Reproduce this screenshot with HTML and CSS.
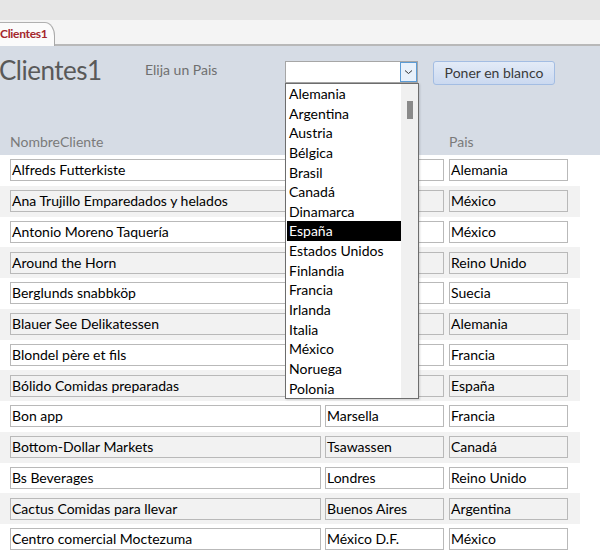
FILE: index.html
```html
<!DOCTYPE html>
<html lang="es">
<head>
<meta charset="utf-8">
<link rel="stylesheet" href="styles.css">
</head>
<body>
<div class="app">
  <div class="topbar"></div>
  <div class="tabstrip"><div class="tab">Clientes1</div></div>
  <div class="header">
    <div class="toprow">
      <div class="title">Clientes1</div>
      <div class="prompt">Elija un Pais</div>
      <div class="combo">
        <div class="combo-text"></div>
        <div class="combo-btn"><svg width="9" height="6" viewBox="0 0 9 6"><path d="M1 1.5 L4.5 4.5 L8 1.5" fill="none" stroke="#333" stroke-width="1"/></svg></div>
      </div>
      <div class="btn">Poner en blanco</div>
    </div>
    <div class="colheads">
      <div class="ch ch-name">NombreCliente</div>
      <div class="ch ch-city"></div>
      <div class="ch ch-country">Pais</div>
    </div>
  </div>
  <div class="rows">
    <div class="row"><div class="tb name">Alfreds Futterkiste</div><div class="tb city"></div><div class="tb country">Alemania</div></div>
    <div class="row alt"><div class="tb name">Ana Trujillo Emparedados y helados</div><div class="tb city"></div><div class="tb country">México</div></div>
    <div class="row"><div class="tb name">Antonio Moreno Taquería</div><div class="tb city"></div><div class="tb country">México</div></div>
    <div class="row alt"><div class="tb name">Around the Horn</div><div class="tb city"></div><div class="tb country">Reino Unido</div></div>
    <div class="row"><div class="tb name">Berglunds snabbköp</div><div class="tb city"></div><div class="tb country">Suecia</div></div>
    <div class="row alt"><div class="tb name">Blauer See Delikatessen</div><div class="tb city"></div><div class="tb country">Alemania</div></div>
    <div class="row"><div class="tb name">Blondel père et fils</div><div class="tb city"></div><div class="tb country">Francia</div></div>
    <div class="row alt"><div class="tb name">Bólido Comidas preparadas</div><div class="tb city"></div><div class="tb country">España</div></div>
    <div class="row"><div class="tb name">Bon app</div><div class="tb city">Marsella</div><div class="tb country">Francia</div></div>
    <div class="row alt"><div class="tb name">Bottom-Dollar Markets</div><div class="tb city">Tsawassen</div><div class="tb country">Canadá</div></div>
    <div class="row"><div class="tb name">Bs Beverages</div><div class="tb city">Londres</div><div class="tb country">Reino Unido</div></div>
    <div class="row alt"><div class="tb name">Cactus Comidas para llevar</div><div class="tb city">Buenos Aires</div><div class="tb country">Argentina</div></div>
    <div class="row"><div class="tb name">Centro comercial Moctezuma</div><div class="tb city">México D.F.</div><div class="tb country">México</div></div>
  </div>
  <div class="list">
    <div class="items">
      <div class="item">Alemania</div>
      <div class="item">Argentina</div>
      <div class="item">Austria</div>
      <div class="item">Bélgica</div>
      <div class="item">Brasil</div>
      <div class="item">Canadá</div>
      <div class="item">Dinamarca</div>
      <div class="item sel">España</div>
      <div class="item">Estados Unidos</div>
      <div class="item">Finlandia</div>
      <div class="item">Francia</div>
      <div class="item">Irlanda</div>
      <div class="item">Italia</div>
      <div class="item">México</div>
      <div class="item">Noruega</div>
      <div class="item">Polonia</div>
    </div>
    <div class="scroll"><div class="thumb"></div></div>
  </div>
</div>
</body>
</html>
```

FILE: styles.css
```css
html, body {
  margin: 0;
  padding: 0;
  background: #ffffff;
}
body {
  font-family: Lato, "Open Sans", sans-serif;
  width: 600px;
  height: 554px;
  overflow: hidden;
}
.app {
  position: relative;
  width: 600px;
  height: 554px;
  overflow: hidden;
}
.topbar {
  height: 20px;
  background: #e6e6e6;
}
.tabstrip {
  height: 24px;
  background: #f4f4f4;
  border-bottom: 2px solid #b8b8b8;
  display: flex;
  align-items: flex-end;
}
.tab {
  height: 23px;
  width: 54px;
  margin-left: -2px;
  padding-left: 2px;
  background: #fbfbfb;
  border-top: 1px solid #b0b0b0;
  border-right: 1px solid #a8a8a8;
  border-top-right-radius: 10px 14px;
  margin-bottom: -2px;
  color: #a4262c;
  font-weight: bold;
  font-size: 12px;
  line-height: 22px;
  letter-spacing: -0.3px;
}
.header {
  height: 109px;
  background: #d6dce5;
  display: flex;
  flex-direction: column;
}
.toprow {
  display: flex;
  align-items: flex-start;
  height: 81px;
  padding-top: 15px;
  box-sizing: border-box;
}
.title {
  margin-left: -1px;
  width: 146px;
  margin-top: -7px;
  font-size: 26px;
  color: #595959;
  letter-spacing: -0.5px;
}
.prompt {
  width: 140px;
  font-size: 14px;
  color: #6f6f6f;
  margin-top: 0px;
}
.combo {
  width: 133px;
  height: 22px;
  box-sizing: border-box;
  background: #ffffff;
  border: 1px solid #a6a6a6;
  display: flex;
  justify-content: flex-end;
}
.combo-btn {
  width: 17px;
  height: 20px;
  box-sizing: border-box;
  background: #e8f1fb;
  border: 1px solid #5b9bd5;
  display: flex;
  align-items: center;
  justify-content: center;
}
.btn {
  margin-left: 15px;
  width: 122px;
  height: 24px;
  box-sizing: border-box;
  border: 1px solid #a3bde3;
  border-radius: 3px;
  background: linear-gradient(#e3ebf7, #cbd9f0);
  color: #3a3a3a;
  font-size: 14px;
  line-height: 22px;
  text-align: center;
}
.colheads {
  display: flex;
  font-size: 14px;
  color: #7a7a7a;
  height: 28px;
  align-items: center;
}
.ch-name { margin-left: 10px; width: 315px; }
.ch-city { width: 124px; }
.ch-country { margin-left: 0; }
.rows {
  display: flex;
  flex-direction: column;
}
.row {
  height: 30.75px;
  flex: none;
  width: 580px;
  display: flex;
  align-items: center;
  gap: 4px;
  padding-left: 10px;
  box-sizing: border-box;
}
.row.alt {
  background: #f2f2f2;
}
.tb {
  height: 22px;
  box-sizing: border-box;
  border: 1px solid #b9b9b9;
  font-size: 14px;
  line-height: 20px;
  padding-left: 1px;
  color: #000000;
  white-space: nowrap;
  overflow: hidden;
}
.tb.name { width: 311px; }
.tb.city { width: 119px; }
.tb.country { width: 119px; margin-left: 1px; }
.list {
  position: absolute;
  left: 285px;
  top: 83px;
  width: 134px;
  height: 316px;
  box-sizing: border-box;
  background: #ffffff;
  border: 1px solid #6d6d6d;
  display: flex;
  box-shadow: 1px 1px 2px rgba(0,0,0,0.15);
}
.items {
  flex: 1;
  padding-top: 0px;
}
.item {
  height: 19.65px;
  line-height: 19.65px;
  font-size: 14px;
  color: #000000;
  padding-left: 2px;
  margin-left: 1px;
  white-space: nowrap;
}
.item.sel {
  background: #000000;
  color: #ffffff;
}
.scroll {
  width: 17px;
  background: #f0f0f0;
  position: relative;
}
.thumb {
  position: absolute;
  left: 6px;
  top: 17px;
  width: 6px;
  height: 18px;
  background: #8a8a8a;
}
```
